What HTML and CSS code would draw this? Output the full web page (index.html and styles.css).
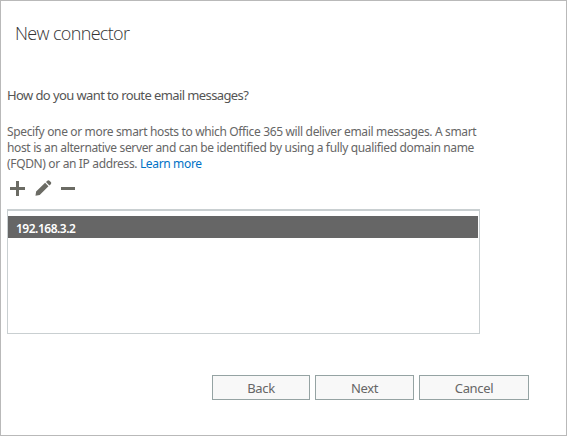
FILE: index.html
```html
<!DOCTYPE html>
<html lang="en">
<head>
<meta charset="utf-8">
<title>New connector</title>
<link rel="stylesheet" href="styles.css">
</head>
<body>
<main class="dialog">
  <h1 class="title">New connector</h1>
  <h2 class="question">How do you want to route email messages?</h2>
  <p class="description"><span class="line l1">Specify one or more smart hosts to which Office 365 will deliver email messages. A smart</span><span class="line l2">host is an alternative server and can be identified by using a fully qualified domain name</span><span class="line l3">(FQDN) or an IP address. <a class="link">Learn more</a></span></p>
  <div class="toolbar">
    <svg width="16" height="16" viewBox="0 0 16 16"><path d="M7 1h3v6h6v3h-6v6h-3v-6h-6V7h6z"/></svg>
    <svg width="17" height="16" viewBox="0 0 17 16"><path d="M1.1 11.4 10.1 2.8l3.4 3.4-8.8 8.8L.5 15.8zM11 2l1.3-1.3q1.1-.9 2.2 0l1.3 1.3q.9 1.1 0 2.2l-1.4 1.3z"/></svg>
    <svg width="15" height="16" viewBox="0 0 15 16"><path d="M0 7h14v3H0z"/></svg>
  </div>
  <div class="list"><div class="item"><span>192.168.3.2</span></div></div>
  <div class="actions">
    <button class="back">Back</button>
    <button class="next">Next</button>
    <button class="cancel">Cancel</button>
  </div>
</main>
</body>
</html>
```
FILE: styles.css
```css
* { box-sizing: border-box; }
body { margin: 0; background: #fff; }
.dialog {
  width: 567px; height: 436px; padding: 20px 0 0 6px;
  border: 1px solid #b9b9b9; color: #666;
  font-family: "Noto Sans", "Open Sans", sans-serif;
  white-space: nowrap;
}
.title { margin: 0 0 0 8px; font: 300 18px/24px "Open Sans", sans-serif; letter-spacing: -0.66px; color: #333; }
.question { margin: 40px 0 0; font-size: 13px; font-weight: 400; line-height: 20px; letter-spacing: -0.6px; color: #555; }
.description { margin: 19px 0 0; font-size: 12px; line-height: 16px; letter-spacing: -0.35px; }
.line { display: block; }
.link { color: #0072c6; }
.toolbar { display: flex; align-items: center; height: 16px; margin: 8px 0 0 2px; gap: 9px; }
.toolbar svg { fill: #6b6b64; }
.toolbar svg:nth-child(2) { margin-left: 1px; }
.list { width: 473px; height: 125px; margin-top: 13px; padding: 5px 1px 0 0; border: 1px solid #c9cfd1; border-top: 2px solid #c9cfd1; }
.item { height: 22px; padding-left: 8px; background: #666; color: #fff; font-size: 12px; font-weight: 600; line-height: 25px; letter-spacing: -0.5px; }
.actions { display: flex; gap: 5px; margin: 41px 0 0 205px; }
button { height: 25px; padding: 2px 0 0; border: 1px solid #95a3a3; background: #f8f8f8; color: #666; font: 13px/21px "Noto Sans", sans-serif; letter-spacing: -0.35px; }
.back { width: 98px; }
.next { width: 99px; }
.cancel { width: 110px; }
```
